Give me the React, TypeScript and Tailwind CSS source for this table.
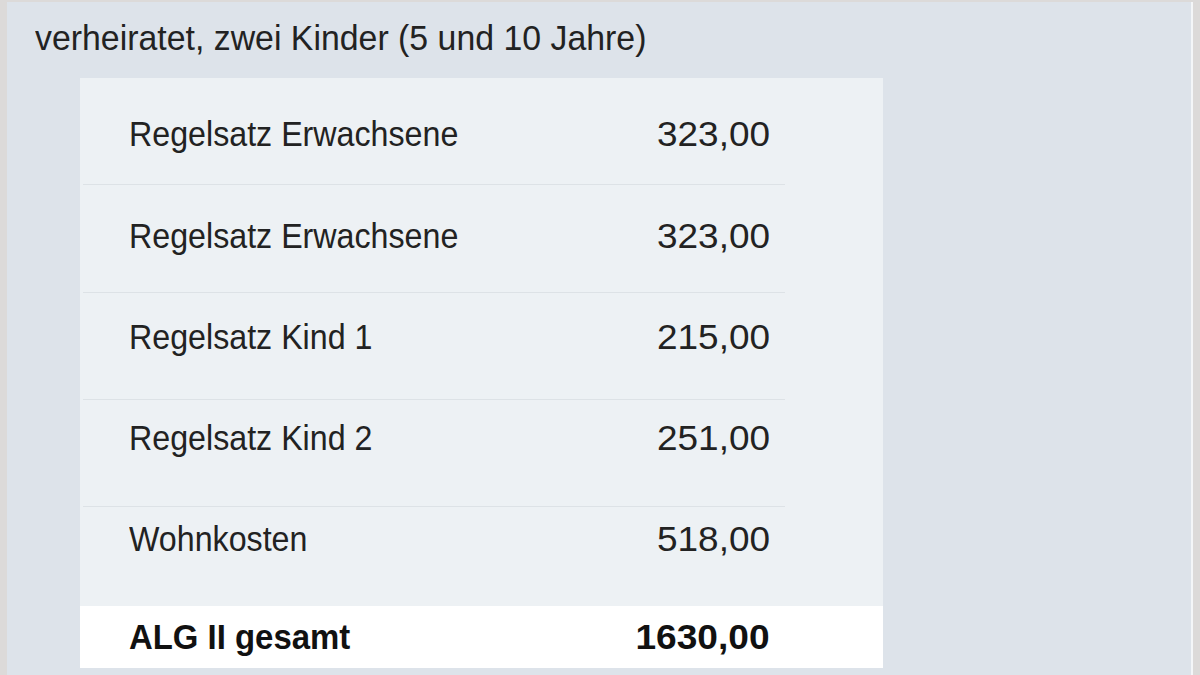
import React from "react";

const rows = [
  { label: "Regelsatz Erwachsene", value: "323,00", h: "h-[107px]", pt: "pt-[36px]" },
  { label: "Regelsatz Erwachsene", value: "323,00", h: "h-[108px]", pt: "pt-[31px]" },
  { label: "Regelsatz Kind 1", value: "215,00", h: "h-[107px]", pt: "pt-[24px]" },
  { label: "Regelsatz Kind 2", value: "251,00", h: "h-[107px]", pt: "pt-[18px]" },
  { label: "Wohnkosten", value: "518,00", h: "h-[99px]", pt: "pt-[12px]" },
];

export default function App() {
  return (
    <div
      className="w-[1200px] h-[675px] bg-[#dcdad9] pl-[7px] pr-[7px] pt-[2px] overflow-hidden"
      style={{ fontFamily: '"Liberation Sans", Arial, sans-serif' }}
    >
      <div className="h-full bg-[#dde3ea] border-r-[2px] border-[#f4f6f8] text-[#222222]">
        <div className="pl-[28px] pt-[16px] h-[76px] text-[35px] leading-[40px]">
          <span className="inline-block origin-left scale-x-[0.967] whitespace-nowrap">
            verheiratet, zwei Kinder (5 und 10 Jahre)
          </span>
        </div>
        <div className="ml-[73px] w-[803px] bg-[#edf1f4]">
          {rows.map((r, i) => (
            <div key={i} className={`${r.h} ${r.pt} flex flex-col`}>
              <div className="flex items-center h-[40px] pl-[49px] w-[690px] text-[35px] leading-[40px]">
                <span className="flex-1">
                  <span className="inline-block origin-left scale-x-[0.92] whitespace-nowrap">{r.label}</span>
                </span>
                <span className="inline-block origin-right scale-x-[1.056]">{r.value}</span>
              </div>
              {i < 4 && (
                <div className="mt-auto ml-[3px] w-[702px] h-[1px] bg-[#dde2e6]" />
              )}
            </div>
          ))}
          <div className="h-[62px] bg-white flex items-center">
            <div className="flex items-center h-[40px] pl-[49px] w-[690px] text-[35px] leading-[40px] font-bold text-[#111]">
              <span className="flex-1">
                <span className="inline-block origin-left scale-x-[0.94] whitespace-nowrap">ALG II gesamt</span>
              </span>
              <span className="inline-block origin-right scale-x-[1.06]">1630,00</span>
            </div>
          </div>
        </div>
      </div>
    </div>
  );
}
